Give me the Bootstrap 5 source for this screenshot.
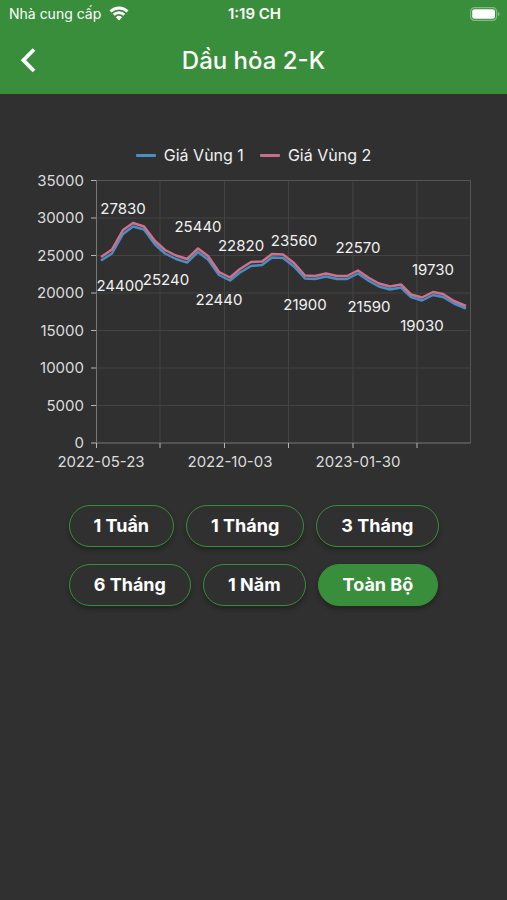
<!DOCTYPE html>
<html lang="vi" data-bs-theme="dark">
<head>
<meta charset="utf-8">
<meta name="viewport" content="width=device-width, initial-scale=1">
<title>Dầu hỏa 2-K</title>
<link href="https://cdn.jsdelivr.net/npm/bootstrap@5.3.0/dist/css/bootstrap.min.css" rel="stylesheet">
<style>
  body { background: #303030; color: #f0f0f0; font-family: Inter, "Liberation Sans", sans-serif; }
  .app-top { background: #398e3c; color: #fff; }
  .status-bar { height: 27px; font-size: 14px; line-height: 27px; padding: 0 7px 0 9px; }
  .status-clock { font-weight: 600; font-size: 15px; }
  .title-bar { height: 67px; }
  .app-title { font-size: 24px; font-weight: 500; line-height: 32px; }
  .side { width: 56px; }
  .back-btn { width: 56px; height: 56px; }
  .chart-area { padding-top: 51px; }
  .legend-row { font-size: 16px; line-height: 20px; gap: 16px; padding-bottom: 1px; }
  .legend-key { width: 20px; height: 3px; border-radius: 1px; }
  .key-one { background: #4a8fc4; }
  .key-two { background: #c4708c; }
  .axis-text { font-size: 15px; fill: #dcdcdc; }
  .value-text { font-size: 15px; fill: #f0f0f0; text-anchor: middle; }
  .ranges { gap: 17px 12px; padding: 31px 56px 40px; }
  .range-btn { height: 42px; padding: 0 24px; border: 1px solid #398e3c; border-radius: 21px; background: #303030; color: #fff; font-size: 18px; font-weight: 700; line-height: 24px; box-shadow: 0 3px 5px rgba(0,0,0,.3); }
  .range-btn.active { background: #398e3c; border-color: #398e3c; color: #fff; }
</style>
<script src="https://cdn.jsdelivr.net/npm/bootstrap@5.3.0/dist/js/bootstrap.bundle.min.js"></script>
</head>
<body class="min-vh-100">
<header class="app-top">
  <div class="status-bar d-flex align-items-center">
    <div class="col d-flex align-items-center gap-2">
      <span>Nhà cung cấp</span>
      <svg width="20" height="15" viewBox="0 0 20 15" fill="none" stroke="#fff" stroke-width="2.8" aria-hidden="true">
        <path d="M1.500 5.400a12.300 12.300 0 0 1 17 0M4.700 8.700a7.700 7.700 0 0 1 10.600 0"/>
        <path d="M10 14.500L6.900 11.300a4.500 4.500 0 0 1 6.200 0z" fill="#fff" stroke="none"/>
      </svg>
    </div>
    <div class="status-clock">1:19 CH</div>
    <div class="col d-flex justify-content-end">
      <svg width="30" height="14" viewBox="0 0 30 14" aria-hidden="true">
        <rect x=".6" y=".6" width="26" height="12.8" rx="4" fill="none" stroke="#82ba84" stroke-width="1.2"/>
        <rect x="2.2" y="2.2" width="22.8" height="9.6" rx="2.4" fill="#fff"/>
        <path d="M28 4.800q1.600.8 1.600 2.200T28 9.200z" fill="#82ba84"/>
      </svg>
    </div>
  </div>
  <div class="title-bar d-flex align-items-center justify-content-between">
    <button type="button" class="back-btn btn border-0 p-0 d-flex align-items-center justify-content-center" aria-label="Quay lại">
      <svg width="16" height="26" viewBox="0 0 16 26" fill="none" stroke="#fff" stroke-width="3.8" aria-hidden="true"><path d="M14 1.500L3.400 12.200L14 23"/></svg>
    </button>
    <h1 class="app-title m-0">Dầu hỏa 2-K</h1>
    <div class="side"></div>
  </div>
</header>
<main>
  <section class="chart-area">
    <div class="legend-row d-flex justify-content-center">
      <div class="d-flex align-items-center gap-2"><span class="legend-key key-one"></span><span>Giá Vùng 1</span></div>
      <div class="d-flex align-items-center gap-2"><span class="legend-key key-two"></span><span>Giá Vùng 2</span></div>
    </div>
    <svg class="d-block w-100" viewBox="0 166 507 308" role="img" aria-label="Biểu đồ giá Dầu hỏa 2-K">
      <path d="M96 218H470M96 255.500H470M96 293H470M96 330.500H470M96 368H470M96 405.500H470M160 180.500V443M224.500 180.500V443M288.500 180.500V443M353 180.500V443M417 180.500V443" stroke="#424344" fill="none"/>
      <path d="M96 180.500H470.500V443" stroke="#555" fill="none"/>
      <path d="M96.500 180V443M96 443H470.500" stroke="#777" fill="none"/>
      <path d="M91 180.500h5M91 218h5M91 255.500h5M91 293h5M91 330.500h5M91 368h5M91 405.500h5M91 443h5M96.500 443v5M160 443v5M224.500 443v5M288.500 443v5M353 443v5M417 443v5" stroke="#b5b5b5" fill="none"/>
      <g fill="none" stroke-width="2.500" stroke-linejoin="round">
        <polyline stroke="#4a8fc4" points="101,260.500 112,253.500 123,234 133,226.500 144,229.500 155,244.500 165,253.500 176,259 187,262.500 198,252 208,259.500 219,275 230,280.500 240,272.500 251,266 262,265 272,257.500 283,258 294,266.500 305,278.500 315,279 326,276.500 337,279 347,279 358,273.500 369,281 379,286.500 390,289.500 401,287.500 411,297 422,300.500 433,295 443,297 454,303.500 466,308.500"/>
        <polyline stroke="#cf718d" points="101,257 112,249.500 123,230 133,223 144,226.500 155,241 165,250 176,255.500 187,259 198,248.500 208,256 219,272 230,277.500 240,269 251,262 262,261.500 272,254 283,254.500 294,263 305,275.500 315,276 326,273.500 337,276 347,276 358,270.500 369,278 379,283.500 390,286.500 401,284.500 411,294.500 422,297.500 433,292 443,294 454,301 466,306"/>
      </g>
      <g class="axis-text" text-anchor="end">
        <text x="84" y="186">35000</text><text x="84" y="223">30000</text><text x="84" y="261">25000</text><text x="84" y="298">20000</text><text x="84" y="336">15000</text><text x="84" y="373">10000</text><text x="84" y="411">5000</text><text x="84" y="448">0</text>
      </g>
      <g class="axis-text" text-anchor="middle">
        <text x="101" y="467">2022-05-23</text><text x="230" y="467">2022-10-03</text><text x="358" y="467">2023-01-30</text>
      </g>
      <g class="value-text">
        <text x="123" y="214">27830</text><text x="120" y="291">24400</text><text x="166" y="285">25240</text><text x="198" y="232">25440</text><text x="241" y="251">22820</text><text x="219" y="305">22440</text><text x="294" y="246">23560</text><text x="305" y="310">21900</text><text x="358" y="253">22570</text><text x="369" y="312">21590</text><text x="433" y="275">19730</text><text x="422" y="331">19030</text>
      </g>
    </svg>
  </section>
  <div class="ranges d-flex flex-wrap justify-content-center" role="group" aria-label="Khoảng thời gian">
    <button type="button" class="range-btn btn">1 Tuần</button>
    <button type="button" class="range-btn btn">1 Tháng</button>
    <button type="button" class="range-btn btn">3 Tháng</button>
    <button type="button" class="range-btn btn">6 Tháng</button>
    <button type="button" class="range-btn btn">1 Năm</button>
    <button type="button" class="range-btn btn active" aria-pressed="true">Toàn Bộ</button>
  </div>
</main>
</body>
</html>
